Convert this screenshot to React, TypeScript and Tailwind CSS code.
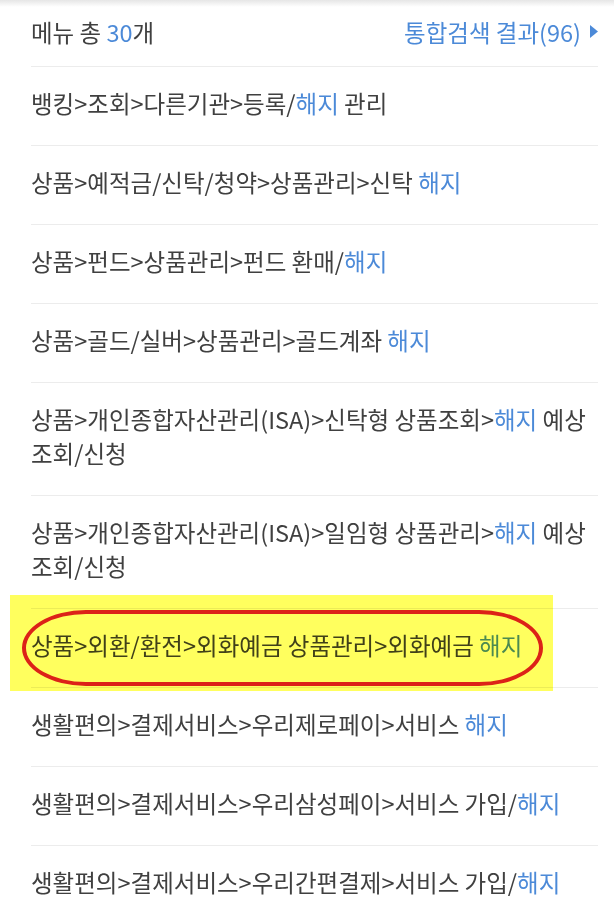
import React from 'react';

type Part = { text: string; blue?: boolean };

const rows: Part[][] = [
  [{ text: '뱅킹>조회>다른기관>등록/' }, { text: '해지', blue: true }, { text: ' 관리' }],
  [{ text: '상품>예적금/신탁/청약>상품관리>신탁 ' }, { text: '해지', blue: true }],
  [{ text: '상품>펀드>상품관리>펀드 환매/' }, { text: '해지', blue: true }],
  [{ text: '상품>골드/실버>상품관리>골드계좌 ' }, { text: '해지', blue: true }],
  [{ text: '상품>개인종합자산관리(ISA)>신탁형 상품조회>' }, { text: '해지', blue: true }, { text: ' 예상 조회/신청' }],
  [{ text: '상품>개인종합자산관리(ISA)>일임형 상품관리>' }, { text: '해지', blue: true }, { text: ' 예상 조회/신청' }],
  [{ text: '상품>외환/환전>외화예금 상품관리>외화예금 ' }, { text: '해지', blue: true }],
  [{ text: '생활편의>결제서비스>우리제로페이>서비스 ' }, { text: '해지', blue: true }],
  [{ text: '생활편의>결제서비스>우리삼성페이>서비스 가입/' }, { text: '해지', blue: true }],
  [{ text: '생활편의>결제서비스>우리간편결제>서비스 가입/' }, { text: '해지', blue: true }],
];

const HIGHLIGHT = 6;

const App: React.FC = () => {
  return (
    <div className="relative min-h-screen overflow-hidden bg-white font-['Noto_Sans_CJK_KR','Noto_Sans',sans-serif] text-[23.5px] text-[#404040]">
      {/* top shadow */}
      <div className="absolute inset-x-0 top-0 h-[7px] bg-gradient-to-b from-[#e6e6e6] to-white" />

      <div className="pl-[31px] pr-[16px]">
        {/* Header */}
        <div className="flex h-[67px] items-center justify-between border-b border-[#ececec] pb-[2px]">
          <p className="leading-[34px]">
            메뉴 총 <span className="text-[#4c8ad8]">30</span>개
          </p>
          <div className="flex items-center gap-[9px] text-[#4c8ad8]">
            <span className="leading-[34px]">통합검색 결과(96)</span>
            <svg width="8" height="13" viewBox="0 0 8 13" className="mb-[1px]">
              <polygon points="0,0 8,6.5 0,13" fill="#4c8ad8" />
            </svg>
          </div>
        </div>

        {/* Menu list */}
        <ul>
          {rows.map((parts, i) => (
            <li
              key={i}
              className="relative border-b border-[#ececec] pt-[19px] pb-[25px] leading-[34px] [word-break:keep-all]"
            >
              {parts.map((p, j) => (
                <span key={j} className={p.blue ? 'text-[#4c8ad8]' : undefined}>
                  {p.text}
                </span>
              ))}
              {i === HIGHLIGHT && (
                <>
                  {/* highlighter marker, multiplied over the text */}
                  <div className="pointer-events-none absolute left-[-21px] top-[-14px] z-10 h-[96px] w-[543px] bg-[#ffff5e] mix-blend-multiply" />
                  <div className="pointer-events-none absolute left-[-9px] top-[1px] z-20 h-[76px] w-[521px] rounded-[64px/38px] border-[4px] border-[#dc2218]" />
                </>
              )}
            </li>
          ))}
        </ul>
      </div>
    </div>
  );
};

export default App;
